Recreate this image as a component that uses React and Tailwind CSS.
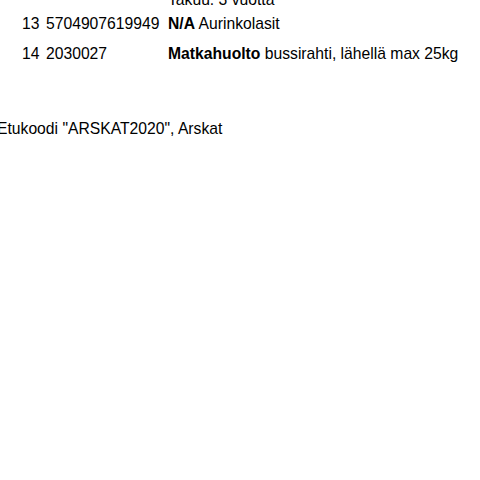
export default function App() {
  return (
    <div className="w-[480px] h-[480px] overflow-hidden bg-white text-black text-[15.7px] leading-[18px]" style={{ fontFamily: '"Liberation Sans", Arial, sans-serif' }}>
      <div className="mt-[-9px] pl-[22px]">
        <div className="grid grid-cols-[24px_122px_1fr]">
          <div></div>
          <div></div>
          <div>Takuu: 3 vuotta</div>
        </div>
        <div className="grid grid-cols-[24px_122px_1fr] mt-[6px]">
          <div>13</div>
          <div>5704907619949</div>
          <div><b>N/A</b> Aurinkolasit</div>
        </div>
        <div className="grid grid-cols-[24px_122px_1fr] mt-[12px]">
          <div>14</div>
          <div>2030027</div>
          <div><b>Matkahuolto</b> bussirahti, lähellä max 25kg</div>
        </div>
      </div>
      <div className="mt-[57px] ml-[-3px]">Etukoodi "ARSKAT2020", Arskat</div>
    </div>
  );
}
